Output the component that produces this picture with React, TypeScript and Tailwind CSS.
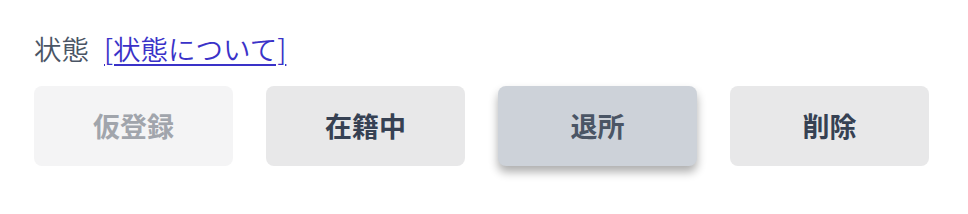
const buttons = [
  { label: "仮登録", className: "bg-[#f4f4f5] text-[#a1a5ac]" },
  { label: "在籍中", className: "bg-[#e8e8e9] text-gray-700" },
  { label: "退所", className: "bg-[#cdd2d9] text-gray-600 shadow-[0_6px_10px_rgba(0,0,0,0.32)]" },
  { label: "削除", className: "bg-[#e8e8e9] text-gray-700" },
];

export default function App() {
  return (
    <div
      className="min-h-[214px] bg-white px-[34px] pt-[29px]"
      style={{ fontFamily: '"Noto Sans CJK JP", "Noto Sans", sans-serif' }}
    >
      {/* 状態ラベル */}
      <div className="flex items-center text-[27.5px] leading-[38px] font-[350]">
        <span className="text-gray-600">状態</span>
        <a href="#" className="ml-[15px] text-[#3a32c8] underline underline-offset-[4px] decoration-[2px]">
          [状態について]
        </a>
      </div>

      {/* 状態ボタン */}
      <div className="mt-[19px] flex gap-[33px]">
        {buttons.map((b) => (
          <button
            key={b.label}
            className={`h-[80px] w-[199px] rounded-lg text-[27px] font-bold ${b.className}`}
          >
            {b.label}
          </button>
        ))}
      </div>
    </div>
  );
}
